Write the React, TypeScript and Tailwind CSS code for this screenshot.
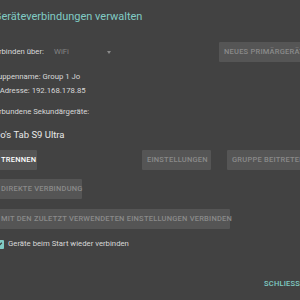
export default function App() {
  const btn =
    "h-[20px] flex items-center px-[5px] bg-[#555555] text-[7.5px] font-medium tracking-[0.03em] whitespace-nowrap rounded-[1px]";
  const label = "text-[7.75px] text-[#d8d8d8] whitespace-nowrap";
  return (
    <div className="w-[300px] h-[300px] overflow-hidden bg-[#424242] font-['Roboto',sans-serif]">
      <div className="flex flex-col">
        <div className="mt-[8px] h-[18px] flex items-center -ml-[6px] text-[11px] text-[#80cbc4] whitespace-nowrap">
          Geräteverbindungen verwalten
        </div>
        <div className="mt-[16px] h-[20px] flex items-center whitespace-nowrap">
          <span className={label + " -ml-[10px] w-[64px] shrink-0"}>Verbinden über:</span>
          <div className="w-[58px] shrink-0 flex items-center justify-between">
            <span className="text-[7.75px] text-[#858585]">WiFi</span>
            <span className="w-0 h-0 border-l-[2.5px] border-r-[2.5px] border-t-[3px] border-l-transparent border-r-transparent border-t-[#8a8a8a] mr-[1px]" />
          </div>
          <div className={btn + " ml-[107px] shrink-0 text-[#8a8a8a]"}>NEUES PRIMÄRGERÄT</div>
        </div>
        <div className={label + " mt-[8px] h-[14px] flex items-center -ml-[10px]"}>
          Gruppenname: Group 1 Jo
        </div>
        <div className={label + " h-[14px] flex items-center -ml-[9.5px]"}>
          IP-Adresse: 192.168.178.85
        </div>
        <div className={label + " mt-[7px] h-[14px] flex items-center -ml-[10px]"}>
          Verbundene Sekundärgeräte:
        </div>
        <div className="mt-[8px] h-[16px] flex items-center -ml-[5px] text-[9.5px] text-[#e8e8e8] whitespace-nowrap">
          Jo's Tab S9 Ultra
        </div>
        <div className="mt-[7px] flex items-center">
          <div className={btn + " -ml-[4px] w-[41px] shrink-0 text-white"}>TRENNEN</div>
          <div className={btn + " ml-[105px] w-[69px] shrink-0 text-[#8a8a8a]"}>EINSTELLUNGEN</div>
          <div className={btn + " ml-[16px] shrink-0 text-[#8a8a8a]"}>GRUPPE BEITRETEN</div>
        </div>
        <div className="mt-[9px] flex">
          <div className={btn + " -ml-[4px] w-[86px] text-[#8a8a8a]"}>DIREKTE VERBINDUNG</div>
        </div>
        <div className="mt-[10px] flex">
          <div className={btn + " -ml-[4px] w-[234px] text-[#8a8a8a]"}>MIT DEN ZULETZT VERWENDETEN EINSTELLUNGEN VERBINDEN</div>
        </div>
        <div className="mt-[7px] h-[16px] flex items-center whitespace-nowrap">
          <div className="-ml-[5px] w-[9px] h-[9px] rounded-[1px] bg-[#80cbc4] flex items-center justify-center shrink-0">
            <svg width="7" height="7" viewBox="0 0 24 24" fill="none" stroke="#3a3a3a" strokeWidth="4">
              <path d="M4 12l5 5L20 6" />
            </svg>
          </div>
          <span className={label + " ml-[4px]"}>Geräte beim Start wieder verbinden</span>
        </div>
        <div className="mt-[24px] h-[16px] flex items-center whitespace-nowrap">
          <span className="ml-[264px] text-[7.5px] font-medium tracking-[0.03em] text-[#80cbc4]">SCHLIESSEN</span>
        </div>
      </div>
    </div>
  );
}
